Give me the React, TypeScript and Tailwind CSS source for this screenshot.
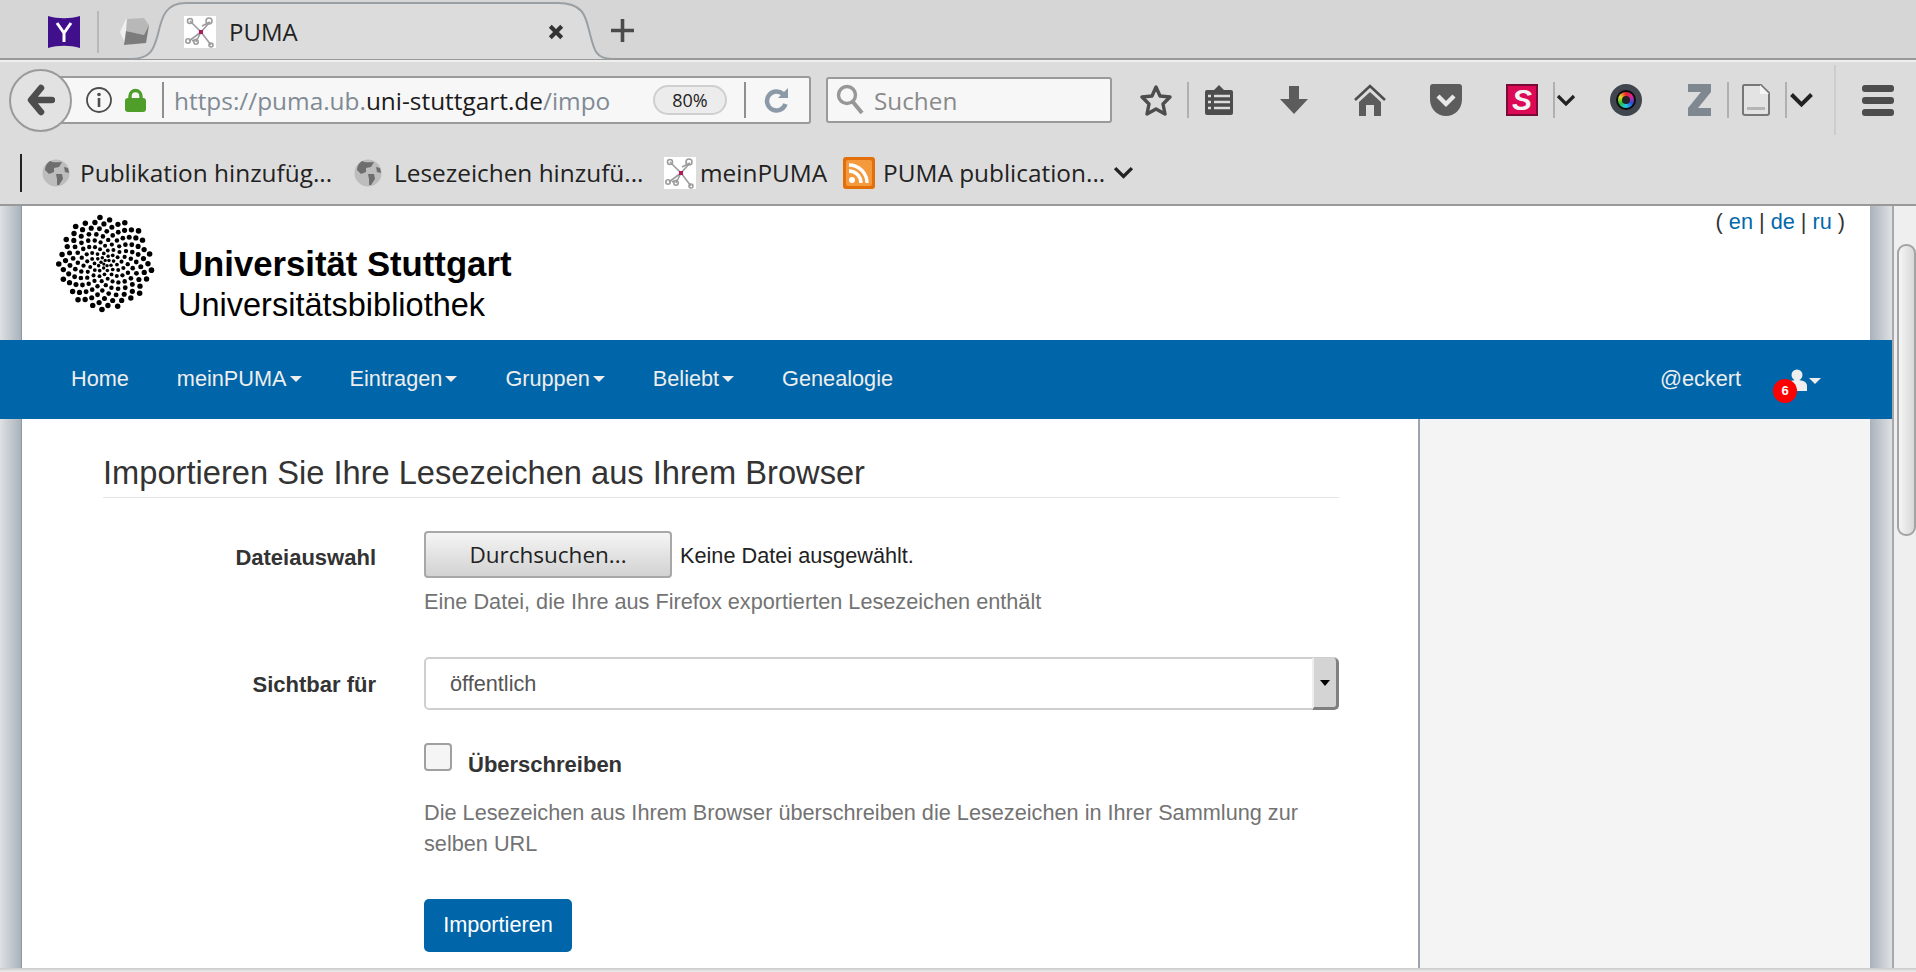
const sans = "font-['Liberation_Sans',Arial,sans-serif]";
const ui = "font-['Open_Sans',sans-serif]";

// sunflower pattern of the university logo
const dotCount = 165;
const dots = Array.from({ length: dotCount }, (_, i) => {
  const n = i + 1;
  const r = 47 * Math.pow(n / dotCount, 0.66);
  const a = n * 2.39996;
  return { x: 50 + r * Math.cos(a), y: 50 + r * Math.sin(a), s: 1.6 + 1.2 * (r / 47) };
});

function Logo() {
  return (
    <svg width="100" height="100" viewBox="0 0 100 100" className="shrink-0">
      {dots.map((d, i) => (
        <circle key={i} cx={d.x} cy={d.y} r={d.s} fill="#000" />
      ))}
    </svg>
  );
}

function PumaIcon() {
  return (
    <svg width="32" height="32" viewBox="0 0 32 32" className="shrink-0">
      <rect width="32" height="32" fill="#fff" />
      <g stroke="#9c9c9c" strokeWidth="1.6" fill="none">
        <path d="M17 16 L6 5 M17 16 L26 6 M17 16 L5 25 M17 16 L27 29 M17 16 L12 26 M18 10 L26 6 M8 25 L13 23" />
        <circle cx="6" cy="5" r="2.5" />
        <circle cx="25" cy="5" r="3" />
        <circle cx="4" cy="25" r="2.2" />
        <circle cx="12" cy="26" r="2.2" />
        <circle cx="27" cy="29" r="2" />
      </g>
      <rect x="15" y="14" width="4" height="4" fill="#b01a5c" />
    </svg>
  );
}

function Globe() {
  return (
    <svg width="28" height="28" viewBox="0 0 28 28" className="shrink-0">
      <circle cx="14" cy="14" r="13.5" fill="#bdbdbd" />
      <path d="M8 2 C11 4 16 3 20 3 L17 8 L12 9 L12 13 L7 15 L3 11 C3 7 5 4 8 2 Z M14 15 L20 15 L21 20 L17 26 L15 26 L15 20 Z M22 8 L26 9 L27 14 L23 13 Z" fill="#6e6e6e" />
    </svg>
  );
}

function Chevron({ w = 20 }: { w?: number }) {
  return (
    <svg width={w} height={w * 0.62} viewBox="0 0 20 12.4" className="shrink-0">
      <path d="M2 2 L10 10 L18 2" fill="none" stroke="#222" strokeWidth="3.2" />
    </svg>
  );
}

function Sep({ className }: { className: string }) {
  return <div className={`h-[36px] w-[2px] shrink-0 bg-[#b0b0b0] ${className}`} />;
}

function Caret({ className = "" }: { className?: string }) {
  return <span className={`inline-block h-0 w-0 border-x-[6px] border-t-[6px] border-x-transparent border-t-[#eee] ${className}`} />;
}

function Gutter({ side }: { side: "left" | "right" }) {
  return (
    <div
      className={
        side === "left"
          ? "w-[22px] shrink-0 border-r border-[#8d99a6] bg-gradient-to-r from-[#dfe1e3] to-[#a9b2bc]"
          : "w-[22px] shrink-0 bg-gradient-to-r from-[#a9b2bc] to-[#dfe1e3]"
      }
    />
  );
}

function TabStrip() {
  return (
    <div className="relative flex h-[60px] items-center border-b-[2px] border-[#999] bg-[#d6d6d6] pt-[6px]">
      <svg width="484" height="60" viewBox="0 0 484 60" className="absolute left-[130px] top-0">
        <path
          d="M0 59 C22 59 24 48 28 34 C32 16 36 3 56 3 L428 3 C456 3 456 20 460 34 C464 50 466 59 482 59 Z"
          fill="#dcdcdc"
        />
        <path
          d="M0 59 C22 59 24 48 28 34 C32 16 36 3 56 3 L428 3 C456 3 456 20 460 34 C464 50 466 59 482 59"
          fill="none"
          stroke="#9a9fa3"
          strokeWidth="2"
        />
      </svg>
      <svg width="32" height="32" viewBox="0 0 32 32" className="relative ml-[48px] shrink-0">
        <path d="M0 0 C10 3 22 3 32 0 L32 32 C22 29 10 29 0 32 Z" fill="#40108c" />
        <path d="M9 7 L16 17 L23 7 M16 17 L16 26" fill="none" stroke="#fff" strokeWidth="3" />
      </svg>
      <div className="relative ml-[17px] h-[42px] w-[2px] bg-[#b8b8b8]" />
      <svg width="30" height="30" viewBox="0 0 30 30" className="relative ml-[20px] shrink-0">
        <path d="M7 2 L1 15 L7 28 L10 28 L10 3 Z" fill="#f0f0f0" />
        <path d="M8 2 L25 1 L30 8 L25 18 L7 14 Z" fill="#b8b8b8" />
        <path d="M7 14 L25 18 L30 8 L27 26 L5 28 Z" fill="#7c7c7c" />
      </svg>
      <div className="relative ml-[35px]">
        <PumaIcon />
      </div>
      <span className={`relative ml-[13px] text-[24px] leading-none text-[#222] ${ui}`}>PUMA</span>
      <svg width="16" height="16" viewBox="0 0 14 14" className="relative ml-[250px] shrink-0">
        <path d="M2 2 L12 12 M12 2 L2 12" stroke="#333" strokeWidth="3.6" />
      </svg>
      <svg width="23" height="23" viewBox="0 0 23 23" className="relative -mt-[3px] ml-[47px] shrink-0">
        <path d="M11.5 0 V23 M0 11.5 H23" stroke="#4a4a4a" strokeWidth="3.6" />
      </svg>
    </div>
  );
}

function AddressRow() {
  return (
    <div className="flex h-[76px] items-center">
      <div className="relative z-10 ml-[9px] flex h-[63px] w-[63px] shrink-0 items-center justify-center rounded-full border-[2px] border-[#9a9a9a] bg-[#e2e2e2]">
        <svg width="28" height="32" viewBox="0 0 28 32">
          <path d="M14 4 L4 16 L14 28 M6 16 H25" fill="none" stroke="#4d4d4d" strokeWidth="6.5" strokeLinecap="round" strokeLinejoin="round" />
        </svg>
      </div>
      <div className={`-ml-[17px] flex h-[48px] w-[756px] shrink-0 items-center rounded-r-[3px] border-[2px] border-[#9a9a9a] bg-[#f7f7f7] pl-[29px] ${ui}`}>
        <svg width="26" height="26" viewBox="0 0 26 26" className="shrink-0">
          <circle cx="13" cy="13" r="12" fill="none" stroke="#4d4d4d" strokeWidth="1.8" />
          <circle cx="13" cy="7.5" r="1.8" fill="#4d4d4d" />
          <path d="M13 11 V20" stroke="#4d4d4d" strokeWidth="2.6" />
        </svg>
        <svg width="21" height="24" viewBox="0 0 21 24" className="ml-[13px] shrink-0">
          <path d="M5 11 V8 a5.5 5.5 0 0 1 11 0 V11" fill="none" stroke="#4f9e2a" strokeWidth="3.4" />
          <rect y="10" width="21" height="14" rx="3" fill="#4f9e2a" />
        </svg>
        <div className="ml-[16px] h-[36px] w-[2px] shrink-0 bg-[#8f8f8f]" />
        <div className="ml-[10px] mt-[2px] w-[437px] shrink-0 overflow-hidden whitespace-nowrap text-[24.4px] leading-[34px] text-[#808a94]">
          https://puma.ub.<span className="text-[#1b1b1b]">uni-stuttgart.de</span>/impo
        </div>
        <div className="ml-[42px] flex h-[30px] w-[74px] shrink-0 items-center justify-center rounded-full border-[2px] border-[#cfcfcf] bg-[#ececec] text-[18px] text-[#222]">
          80%
        </div>
        <div className="ml-[17px] h-[36px] w-[2px] shrink-0 bg-[#8f8f8f]" />
        <svg width="26" height="28" viewBox="0 0 26 28" className="ml-[18px] shrink-0">
          <path d="M19 8 A9.5 9.5 0 1 0 21.5 18" fill="none" stroke="#8c9aa8" strokeWidth="4.5" />
          <path d="M14 12 L24 2 V12 Z" fill="#8c9aa8" />
        </svg>
      </div>
      <div className={`ml-[15px] flex h-[46px] w-[286px] shrink-0 items-center rounded-[3px] border-[2px] border-[#9a9a9a] bg-[#f7f7f7] pl-[8px] ${ui}`}>
        <svg width="28" height="32" viewBox="0 0 28 32" className="shrink-0">
          <circle cx="11" cy="11" r="8.5" fill="none" stroke="#979797" strokeWidth="3.4" />
          <path d="M17 18 L26 29" stroke="#979797" strokeWidth="4" />
        </svg>
        <span className="ml-[10px] mt-[2px] text-[24.3px] leading-[34px] text-[#8a8a8a]">Suchen</span>
      </div>
      <svg width="32" height="32" viewBox="0 0 32 32" className="ml-[28px] shrink-0">
        <path d="M16 3 L20 12 L30 13 L23 20 L25 30 L16 25 L7 30 L9 20 L2 13 L12 12 Z" fill="none" stroke="#4d4d4d" strokeWidth="3.4" strokeLinejoin="round" />
      </svg>
      <Sep className="ml-[15px]" />
      <svg width="28" height="32" viewBox="0 0 28 32" className="ml-[16px] shrink-0">
        <path d="M2 6 H9 L14 1 L19 6 H26 a2 2 0 0 1 2 2 V29 a2 2 0 0 1 -2 2 H2 a2 2 0 0 1 -2 -2 V8 a2 2 0 0 1 2 -2 Z" fill="#4d4d4d" />
        <path d="M9 12 H25 M9 18 H25 M9 24 H25 M3 12 H6 M3 18 H6 M3 24 H6" stroke="#dcdcdc" strokeWidth="2.6" />
      </svg>
      <svg width="28" height="28" viewBox="0 0 28 28" className="ml-[47px] shrink-0">
        <path d="M9 0 H19 V13 H28 L14 28 L0 13 H9 Z" fill="#5c5c5c" />
      </svg>
      <svg width="32" height="34" viewBox="0 0 32 34" className="ml-[46px] shrink-0">
        <path d="M1 17 L16 3 L31 17" fill="none" stroke="#4d4d4d" strokeWidth="2.6" />
        <path d="M5 19 L16 9 L27 19 V33 H20 V22 H12 V33 H5 Z" fill="#5c5c5c" />
      </svg>
      <svg width="32" height="34" viewBox="0 0 32 34" className="ml-[44px] shrink-0">
        <path d="M3 1 H29 a3 3 0 0 1 3 3 V16 C32 26 25 33 16 33 C7 33 0 26 0 16 V4 a3 3 0 0 1 3 -3 Z" fill="#5c5c5c" />
        <path d="M8 13 L16 21 L24 13" fill="none" stroke="#e8e8e8" strokeWidth="4.4" />
      </svg>
      <div className="ml-[44px] flex h-[32px] w-[32px] shrink-0 items-center justify-center border-[2px] border-[#7a0a38] bg-[#dc0a54] font-['Liberation_Sans',sans-serif] text-[30px] font-bold italic leading-[28px] text-[#f4f4f4]">
        S
      </div>
      <Sep className="ml-[15px]" />
      <div className="ml-[1px]">
        <Chevron />
      </div>
      <div className="ml-[34px] flex h-[32px] w-[32px] shrink-0 items-center justify-center rounded-full bg-[#41464e]">
        <div className="flex h-[20px] w-[20px] items-center justify-center rounded-full bg-[#0b0b0d]">
          <div className="flex h-[16px] w-[16px] items-center justify-center rounded-full bg-[conic-gradient(#e8232a,#d8249a,#2f4fe0,#23c8e8,#27c23a,#e8d823,#e8232a)]">
            <div className="h-[8px] w-[8px] rounded-full bg-[#222]" />
          </div>
        </div>
      </div>
      <svg width="23" height="32" viewBox="0 0 23 32" className="ml-[46px] shrink-0">
        <path d="M0 0 H23 V8 L10 24 H23 V32 H0 V24 L13 8 H0 Z" fill="#7f8790" />
      </svg>
      <Sep className="ml-[16px]" />
      <svg width="28" height="32" viewBox="0 0 28 32" className="ml-[13px] shrink-0">
        <path d="M2 1 H19 L27 9 V29 a2 2 0 0 1 -2 2 H3 a2 2 0 0 1 -2 -2 V2 Z" fill="#e3e3e3" stroke="#777" strokeWidth="2" />
        <path d="M18 1 V10 H27" fill="#f5f5f5" />
        <rect x="5" y="23" width="18" height="3" fill="#b5b5b5" />
      </svg>
      <Sep className="ml-[15px]" />
      <div className="ml-[2px]">
        <Chevron w={25} />
      </div>
      <div className="ml-[20px] h-[70px] w-[2px] shrink-0 bg-[#cdcdcd]" />
      <div className="ml-[26px] flex w-[32px] shrink-0 flex-col gap-[5px]">
        <div className="h-[7px] rounded-[3px] bg-[#4d4d4d]" />
        <div className="h-[7px] rounded-[3px] bg-[#4d4d4d]" />
        <div className="h-[7px] rounded-[3px] bg-[#4d4d4d]" />
      </div>
    </div>
  );
}

function BookmarkRow() {
  return (
    <div className={`flex h-[68px] items-center border-b-[2px] border-[#999] pt-[3px] text-[24.4px] leading-[34px] text-[#222] ${ui}`}>
      <div className="ml-[20px] h-[38px] w-[2px] bg-[#222]" />
      <div className="ml-[20px]">
        <Globe />
      </div>
      <span className="ml-[10px] w-[274px] whitespace-nowrap">Publikation hinzufüg...</span>
      <Globe />
      <span className="ml-[12px] w-[270px] whitespace-nowrap">Lesezeichen hinzufü...</span>
      <PumaIcon />
      <span className="ml-[4px] w-[143px] whitespace-nowrap">meinPUMA</span>
      <svg width="32" height="32" viewBox="0 0 32 32" className="shrink-0">
        <rect width="32" height="32" rx="3" fill="#e36f0a" />
        <rect x="3" y="3" width="26" height="26" rx="2" fill="#f59a3c" />
        <circle cx="9" cy="23" r="3" fill="#fff" />
        <path d="M6 14 A12 12 0 0 1 18 26 M6 8 A18 18 0 0 1 24 26" fill="none" stroke="#fff" strokeWidth="3.4" />
      </svg>
      <span className="ml-[8px] w-[230px] whitespace-nowrap">PUMA publication...</span>
      <Chevron w={21} />
    </div>
  );
}

function Site() {
  return (
    <div className={`flex min-w-0 flex-1 flex-col ${sans}`}>
      <div className="flex h-[134px]">
        <Gutter side="left" />
        <div className="flex flex-1 bg-white">
          <div className="ml-[33px] mt-[7px]">
            <Logo />
          </div>
          <div className="ml-[23px] mt-[39px] text-black">
            <div className="text-[34.7px] font-bold leading-[39px]">Universität Stuttgart</div>
            <div className="text-[32.5px] leading-[42px]">Universitätsbibliothek</div>
          </div>
          <div className="ml-auto mr-[25px] mt-[3px] text-[21.7px] leading-[26px] text-[#333]">
            ( <span className="text-[#0069aa]">en</span> | <span className="text-[#0069aa]">de</span> | <span className="text-[#0069aa]">ru</span> )
          </div>
        </div>
        <Gutter side="right" />
      </div>

      <div className="flex h-[79px] items-center bg-[#0065a9] pl-[71px] text-[21.7px] text-[#eee]">
        <div className="flex items-center gap-[48px]">
          <span>Home</span>
          {["meinPUMA", "Eintragen", "Gruppen", "Beliebt"].map((item) => (
            <span key={item} className="flex items-center">
              {item}
              <Caret className="ml-[3px]" />
            </span>
          ))}
          <span>Genealogie</span>
        </div>
        <span className="ml-auto">@eckert</span>
        <div className="relative ml-[46px] mr-[71px] flex items-center">
          <svg width="20" height="22" viewBox="0 0 20 22" className="shrink-0">
            <circle cx="10" cy="6" r="5.5" fill="#eee" />
            <path d="M0 22 V17 C0 13 4 11 10 11 C16 11 20 13 20 17 V22 Z" fill="#eee" />
          </svg>
          <Caret className="ml-[2px] mt-[2px]" />
          <span className="absolute -left-[14px] top-[10px] flex h-[24px] w-[24px] items-center justify-center rounded-full bg-[#f00] text-[13px] font-bold text-white">
            6
          </span>
        </div>
      </div>

      <div className="flex flex-1">
        <Gutter side="left" />
        <div className="w-[1398px] shrink-0 border-r-[2px] border-[#9aa5b0] bg-white pl-[81px] pr-[79px] text-[21.7px] text-[#333]">
          <h1 className="mt-[33px] border-b border-[#e5e5e5] pb-[3px] text-[32.65px] leading-[42px] text-[#333]">
            Importieren Sie Ihre Lesezeichen aus Ihrem Browser
          </h1>
          <div className="mt-[33px] flex">
            <label className="w-[273px] shrink-0 pt-[12px] text-right text-[22px] font-bold leading-[30px]">Dateiauswahl</label>
            <div className="ml-[48px] flex-1">
              <div className="flex items-center">
                <button className={`h-[47px] w-[248px] rounded-[4px] border-[2px] border-[#a8a8a8] bg-gradient-to-b from-[#f5f5f5] to-[#d2d2d2] text-[22.5px] text-[#222] ${ui}`}>
                  Durchsuchen...
                </button>
                <span className="ml-[8px] mt-[3px] text-[#222]">Keine Datei ausgewählt.</span>
              </div>
              <p className="mt-[9px] leading-[30px] text-[#737373]">Eine Datei, die Ihre aus Firefox exportierten Lesezeichen enthält</p>
            </div>
          </div>
          <div className="mt-[40px] flex">
            <label className="w-[273px] shrink-0 pt-[13px] text-right text-[22px] font-bold leading-[30px]">Sichtbar für</label>
            <div className="relative ml-[48px] flex h-[53px] flex-1 items-center rounded-[5px] border-[2px] border-[#cfcfcf] bg-white pl-[24px] pt-[2px] text-[#555]">
              öffentlich
              <div className="absolute -bottom-[2px] -right-[2px] -top-[1px] flex w-[27px] items-center justify-center rounded-r-[5px] border-b-[3px] border-l-[2px] border-r-[3px] border-b-[#808080] border-l-[#eee] border-r-[#808080] bg-[#d4d4d4]">
                <span className="inline-block h-0 w-0 border-x-[5px] border-t-[6px] border-x-transparent border-t-black" />
              </div>
            </div>
          </div>
          <div className="ml-[321px]">
            <div className="mt-[33px] flex items-start">
              <div className="h-[28px] w-[28px] shrink-0 rounded-[4px] border-[2px] border-[#a0a0a0] bg-[#f5f5f5]" />
              <span className="ml-[16px] mt-[7px] text-[22px] font-bold leading-[30px]">Überschreiben</span>
            </div>
            <p className="mt-[17px] leading-[31px] text-[#737373]">
              Die Lesezeichen aus Ihrem Browser überschreiben die Lesezeichen in Ihrer Sammlung zur selben URL
            </p>
            <button className="mt-[40px] h-[53px] w-[148px] rounded-[5px] bg-[#0065a9] text-[21.7px] text-white">Importieren</button>
          </div>
        </div>
        <div className="flex-1 bg-[#f4f4f4]" />
        <Gutter side="right" />
      </div>
    </div>
  );
}

export default function App() {
  return (
    <div className="flex h-[972px] w-[1916px] flex-col overflow-hidden bg-[#dcdcdc]">
      <TabStrip />
      <div className="border-t-[2px] border-[#efefef]">
        <AddressRow />
        <BookmarkRow />
      </div>
      <div className="flex min-h-0 flex-1">
        <Site />
        <div className="w-[24px] shrink-0 border-l-[2px] border-[#a8a8a8] bg-[#efefef] pl-[3px] pt-[38px]">
          <div className="h-[292px] w-[19px] rounded-t-[9px] rounded-b-[9px] border-[2px] border-[#a3a3a3] bg-gradient-to-r from-[#f5f5f5] to-[#d8d8d8]" />
        </div>
      </div>
      <div className="h-[4px] shrink-0 bg-gradient-to-b from-[#c8c8c8] to-[#eee]" />
    </div>
  );
}
